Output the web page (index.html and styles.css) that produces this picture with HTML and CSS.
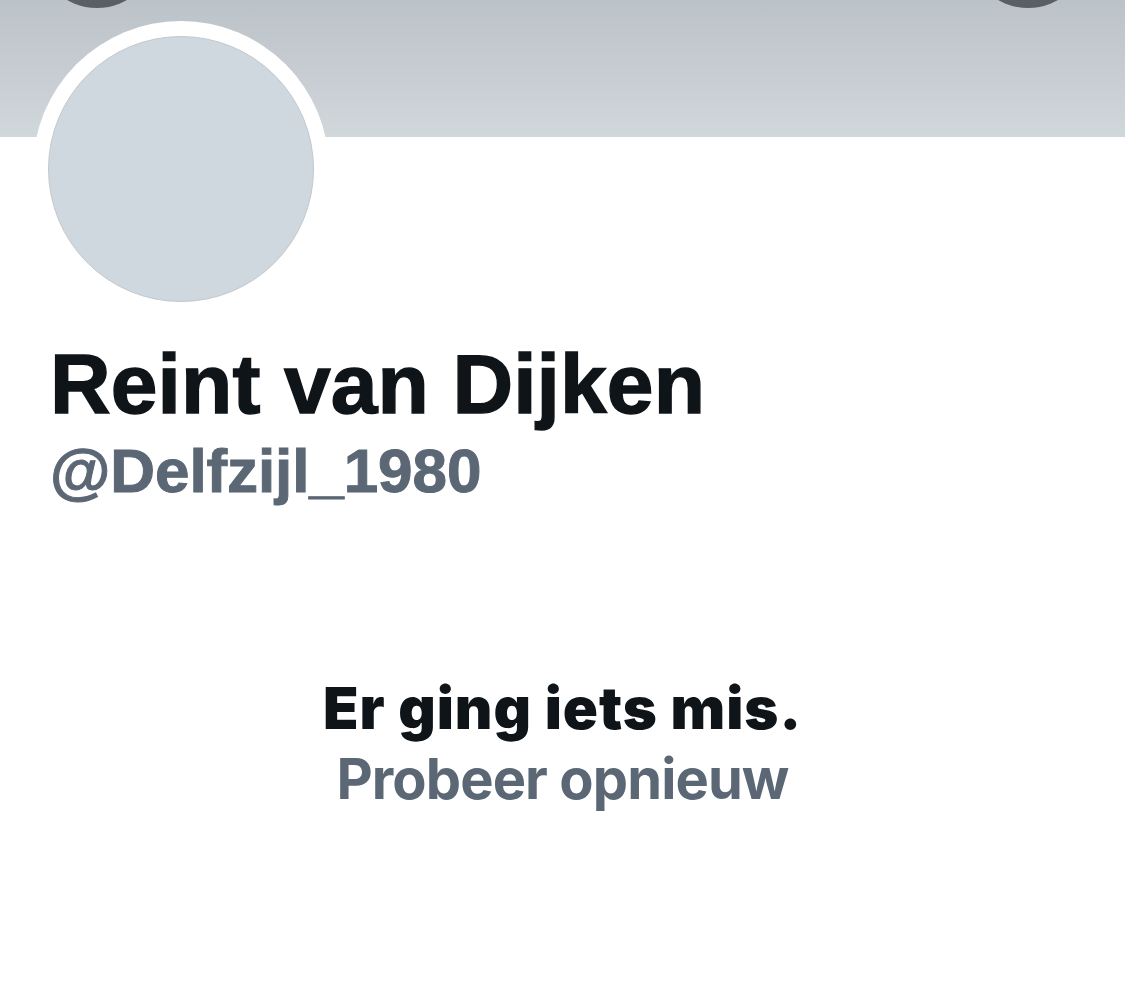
FILE: index.html
```html
<!DOCTYPE html>
<html lang="nl">
<head>
<meta charset="utf-8">
<title>Reint van Dijken (@Delfzijl_1980)</title>
<link rel="stylesheet" href="styles.css">
</head>
<body>
<div class="page">
  <header class="banner">
    <span class="banner-btn banner-btn-left"></span>
    <span class="banner-btn banner-btn-right"></span>
  </header>
  <section class="profile">
    <div class="avatar-ring"><div class="avatar"></div></div>
    <h1 class="name">Reint van Dijken</h1>
    <div class="handle">@Delfzijl_1980</div>
  </section>
  <section class="error">
    <div class="error-title">Er ging iets mis.</div>
    <div class="error-retry">Probeer opnieuw</div>
  </section>
</div>
</body>
</html>
```
FILE: styles.css
```css
html, body {
  margin: 0;
  padding: 0;
  background: #ffffff;
}
.page {
  width: 1125px;
  height: 1003px;
  overflow: hidden;
  background: #ffffff;
}
.banner {
  position: relative;
  height: 137px;
  background: linear-gradient(180deg, #bcc3c8 0%, #c7cdd2 55%, #d1d8dc 100%);
  overflow: hidden;
}
.banner-btn {
  position: absolute;
  top: -112px;
  width: 120px;
  height: 120px;
  border-radius: 50%;
  background: #5a5f64;
}
.banner-btn-left { left: 37px; }
.banner-btn-right { left: 968px; }

.profile {
  padding-left: 50px;
}
.avatar-ring {
  width: 296px;
  height: 296px;
  margin-top: -116px;
  margin-left: -17px;
  border-radius: 50%;
  background: #ffffff;
  display: flex;
  align-items: center;
  justify-content: center;
  position: relative;
}
.avatar {
  width: 264px;
  height: 264px;
  border-radius: 50%;
  background: #cfd8de;
  border: 1px solid #c2c9cf;
}
.name {
  margin: 25px 0 0 0;
  font-family: "Liberation Sans", Arial, sans-serif;
  font-weight: 700;
  font-size: 84px;
  line-height: 84px;
  color: #0f1419;
  letter-spacing: 0.1px;
  -webkit-text-stroke: 1.4px #0f1419;
}
.handle {
  margin-top: 14px;
  font-family: "Liberation Sans", Arial, sans-serif;
  font-weight: 700;
  font-size: 62px;
  line-height: 62px;
  color: #5b6774;
  letter-spacing: -0.1px;
  -webkit-text-stroke: 1px #5b6774;
}
.error {
  margin-top: 177px;
  display: flex;
  flex-direction: column;
  align-items: center;
  font-family: Inter, "Noto Sans", sans-serif;
}
.error-title {
  font-weight: 900;
  font-size: 58px;
  line-height: 58px;
  color: #0f1419;
  letter-spacing: 1px;
}
.error-retry {
  margin-top: 14px;
  font-weight: 700;
  font-size: 56px;
  line-height: 56px;
  color: #5b6774;
  letter-spacing: -0.9px;
}
```
